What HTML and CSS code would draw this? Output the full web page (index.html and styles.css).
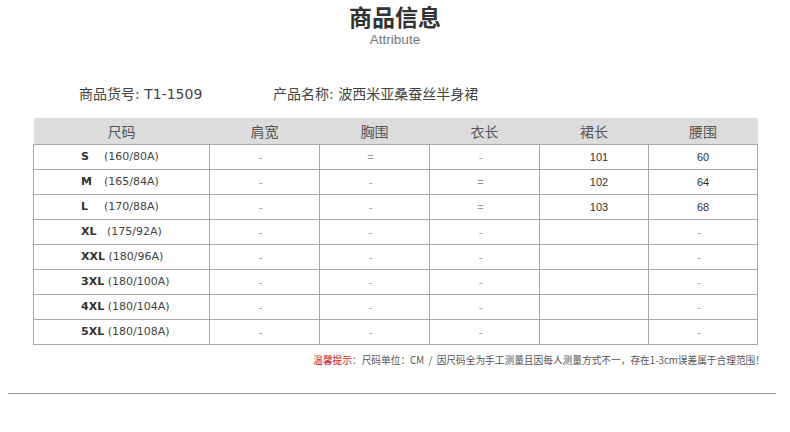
FILE: index.html
```html
<!DOCTYPE html>
<html lang="zh-CN">
<head>
<meta charset="utf-8">
<title>商品信息</title>
<link rel="stylesheet" href="styles.css">
</head>
<body>
<div class="page">
  <header class="title">
    <h1>商品信息</h1>
    <div class="sub">Attribute</div>
  </header>
  <div class="info">
    <span class="code">商品货号: T1-1509</span>
    <span class="name">产品名称: 波西米亚桑蚕丝半身裙</span>
  </div>
  <table class="sizes">
    <colgroup>
      <col class="c-size"><col class="c-a"><col class="c-a"><col class="c-a"><col class="c-b"><col class="c-b">
    </colgroup>
    <thead>
      <tr><th>尺码</th><th>肩宽</th><th>胸围</th><th>衣长</th><th>裙长</th><th>腰围</th></tr>
    </thead>
    <tbody>
      <tr><td class="size"><b class="lbl">S</b>(160/80A)</td><td class="dash">-</td><td class="dash">=</td><td class="dash">-</td><td class="num">101</td><td>60</td></tr>
      <tr><td class="size"><b class="lbl">M</b>(165/84A)</td><td class="dash">-</td><td class="dash">-</td><td class="dash">=</td><td class="num">102</td><td>64</td></tr>
      <tr><td class="size"><b class="lbl">L</b>(170/88A)</td><td class="dash">-</td><td class="dash">-</td><td class="dash">=</td><td class="num">103</td><td>68</td></tr>
      <tr><td class="size"><b class="lbl xl">XL</b>(175/92A)</td><td class="dash">-</td><td class="dash">-</td><td class="dash">-</td><td class="num"></td><td class="dash">-</td></tr>
      <tr><td class="size"><b class="lbl">XXL</b> (180/96A)</td><td class="dash">-</td><td class="dash">-</td><td class="dash">-</td><td class="num"></td><td class="dash">-</td></tr>
      <tr><td class="size"><b class="lbl">3XL</b> (180/100A)</td><td class="dash">-</td><td class="dash">-</td><td class="dash">-</td><td class="num"></td><td class="dash">-</td></tr>
      <tr><td class="size"><b class="lbl">4XL</b> (180/104A)</td><td class="dash">-</td><td class="dash">-</td><td class="dash">-</td><td class="num"></td><td class="dash">-</td></tr>
      <tr><td class="size"><b class="lbl">5XL</b> (180/108A)</td><td class="dash">-</td><td class="dash">-</td><td class="dash">-</td><td class="num"></td><td class="dash">-</td></tr>
    </tbody>
  </table>
  <p class="note"><span class="warn">温馨提示</span>：尺码单位：CM&nbsp; / &nbsp;因尺码全为手工测量且因每人测量方式不一，存在1-3cm误差属于合理范围！</p>
  <hr class="rule">
</div>
</body>
</html>
```

FILE: styles.css
```css
* { box-sizing: border-box; }
html, body { margin: 0; padding: 0; background: #fff; }
body {
  font-family: "Noto Sans CJK SC", "DejaVu Sans", sans-serif;
  color: #333;
  width: 790px;
}
.page { width: 790px; }
.title { text-align: center; padding-top: 2px; }
.title h1 {
  margin: 0;
  font-size: 23px;
  line-height: 29.5px;
  font-weight: 700;
  color: #333;
}
.title .sub {
  margin-top: 1px;
  font-family: "Liberation Sans", Arial, sans-serif;
  font-size: 13.5px;
  line-height: 14px;
  color: #777;
}
.info {
  display: flex;
  margin-top: 37.5px;
  padding-left: 79px;
  font-family: "DejaVu Sans", "Noto Sans CJK SC", sans-serif;
  font-size: 14px;
  line-height: 20px;
  color: #444;
}
.info .code { width: 194px; }
.sizes {
  margin: 14px 0 0 33px;
  width: 725px;
  border-collapse: collapse;
  table-layout: fixed;
}
.c-size { width: 176px; }
.c-a { width: 110px; }
.c-b { width: 109px; }
.sizes th {
  background: #dcdcdc;
  height: 26px;
  padding: 0;
  font-weight: 400;
  font-size: 14px;
  color: #555;
  text-align: center;
  border: 0;
}
.sizes td {
  height: 25px;
  padding: 0;
  border: 1px solid #aaa;
  text-align: center;
  font-family: "Liberation Sans", Arial, sans-serif;
  font-size: 11px;
  color: #333;
}
.sizes td.dash { color: #999; padding-right: 8px; }
.sizes td.num { padding-left: 10px; }
.sizes td.size {
  text-align: left;
  padding-left: 47px;
  font-family: "DejaVu Sans", sans-serif;
  font-size: 11px;
  color: #444;
}
.lbl {
  display: inline-block;
  min-width: 23px;
  font-weight: 700;
  color: #333;
}
.lbl.xl { min-width: 26px; }
.note {
  margin: 8px 25px 0 0;
  text-align: right;
  font-size: 9.7px;
  line-height: 14px;
  color: #555;
}
.warn { color: #d02020; }
.rule {
  margin: 26px 14px 0 8px;
  border: 0;
  border-top: 1px solid #999;
  height: 0;
}
```
